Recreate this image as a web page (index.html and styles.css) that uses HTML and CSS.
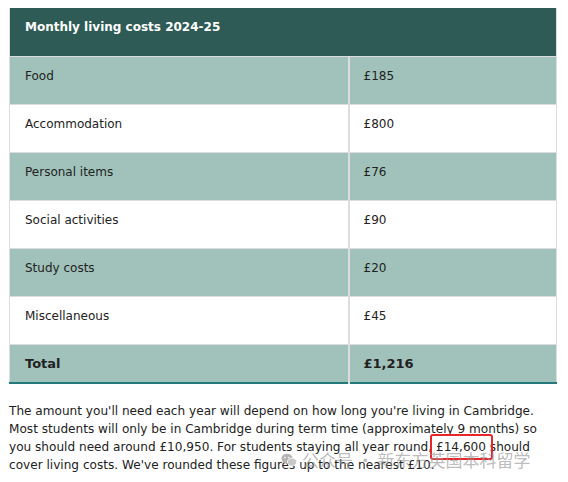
FILE: index.html
```html
<!DOCTYPE html>
<html>
<head>
<meta charset="utf-8">
<link rel="stylesheet" href="styles.css">
</head>
<body>
<div class="page">
  <table class="costs">
    <thead>
      <tr><th colspan="2">Monthly living costs 2024-25</th></tr>
    </thead>
    <tbody>
      <tr class="alt"><td>Food</td><td>£185</td></tr>
      <tr><td>Accommodation</td><td>£800</td></tr>
      <tr class="alt"><td>Personal items</td><td>£76</td></tr>
      <tr><td>Social activities</td><td>£90</td></tr>
      <tr class="alt"><td>Study costs</td><td>£20</td></tr>
      <tr><td>Miscellaneous</td><td>£45</td></tr>
      <tr class="alt total"><td>Total</td><td>£1,216</td></tr>
    </tbody>
  </table>
  <p class="note">The amount you'll need each year will depend on how long you're living in Cambridge. Most students will only be in Cambridge during term time (approximately 9 months) so you should need around £10,950. For students staying all year round, <span class="mark">£14,600</span> should cover living costs. We've rounded these figures up to the nearest £10.</p>
  <div class="watermark">
    <svg width="16" height="14" viewBox="0 0 16 14"><ellipse cx="6" cy="5.5" rx="5.6" ry="4.8" fill="#b4b4b4"/><ellipse cx="11" cy="9" rx="4.6" ry="3.9" fill="#c8c8c8" stroke="#fff" stroke-width="0.8"/><circle cx="4" cy="4.5" r="0.8" fill="#fff"/><circle cx="7.8" cy="4.5" r="0.8" fill="#fff"/></svg>
    <span>公众号 · 新东方英国本科留学</span>
  </div>
</div>
</body>
</html>
```
FILE: styles.css
```css
html, body { margin: 0; padding: 0; background: #fff; }
.page {
  position: relative;
  padding: 8px 11px 0 9px;
  font-family: "DejaVu Sans", Verdana, sans-serif;
  color: #222;
}
.costs {
  width: 548px;
  border-collapse: collapse;
  font-size: 12px;
  border-left: 1px solid #ddd;
  border-right: 1px solid #ddd;
  border-bottom: 2px solid #24797a;
}
.costs th {
  background: #2e5b55;
  color: #fff;
  text-align: left;
  font-weight: bold;
  height: 48px;
  box-sizing: border-box;
  padding: 0 15px 10px;
  vertical-align: middle;
  font-size: 12px;
}
.costs td {
  height: 48px;
  box-sizing: border-box;
  padding: 0 15px 8px;
  vertical-align: middle;
  border-top: 1px solid #ddd;
  color: #222;
}
.costs td:first-child { width: 339px; border-right: 2px solid #ddd; }
.costs td:last-child { padding-left: 14px; }
.costs tr.alt td { background: #a0c2bb; }
.costs tr.total td {
  height: 39px;
  padding-bottom: 0;
  font-weight: bold;
  font-size: 13px;
}
.note {
  margin: 18px 0 0 0;
  width: 546px;
  font-size: 12.1px;
  line-height: 18px;
  color: #222;
}
.mark {
  position: relative;
}
.mark::after {
  content: "";
  position: absolute;
  left: -6px; right: -7px; top: -6px; bottom: -6px;
  border: 2px solid #e8262a;
  border-radius: 3px;
}
.watermark {
  position: absolute;
  left: 281px;
  top: 450px;
  display: flex;
  align-items: center;
  gap: 5px;
  color: rgba(150,150,150,0.65);
  font-family: "Noto Sans CJK SC", sans-serif;
  font-size: 17px;
  line-height: 20px;
}
```
